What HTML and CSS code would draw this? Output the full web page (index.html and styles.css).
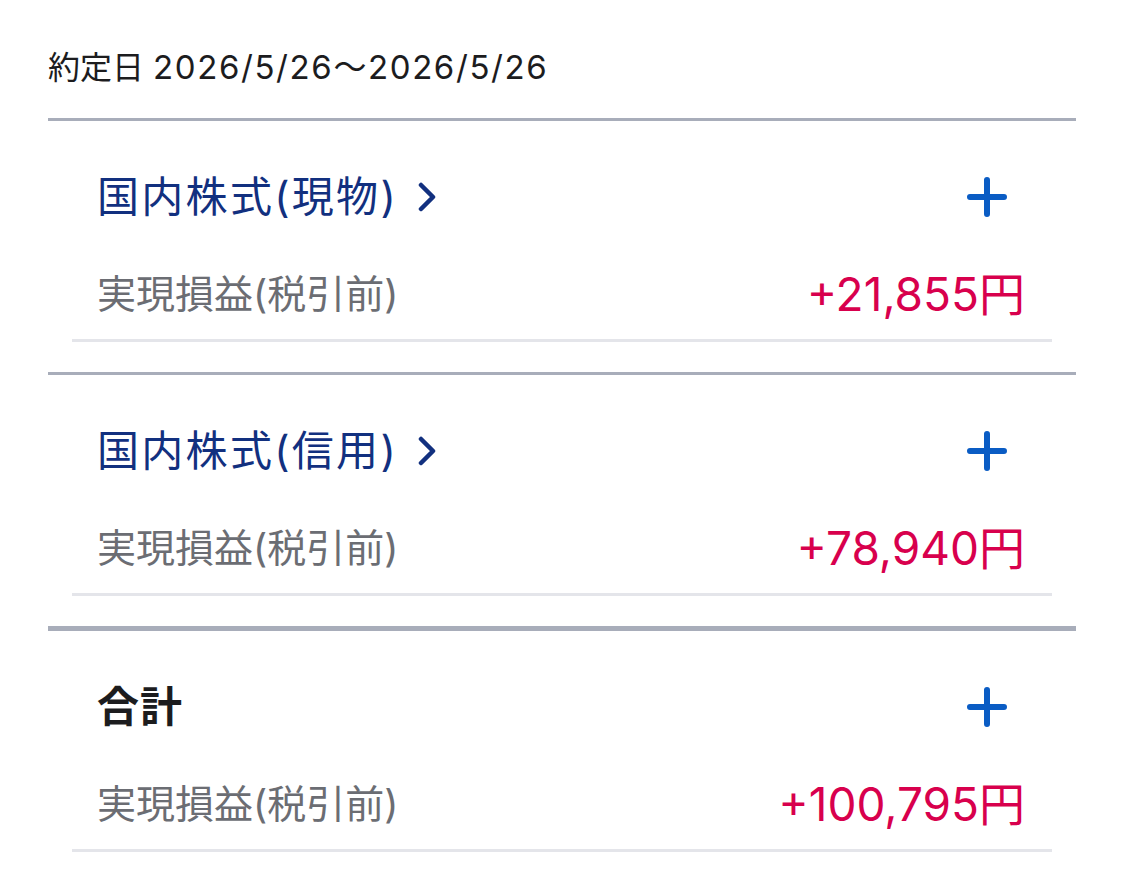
FILE: index.html
```html
<!DOCTYPE html>
<html lang="ja">
<head>
<meta charset="utf-8">
<link rel="stylesheet" href="styles.css">
</head>
<body>
<div class="page">
  <div class="period">約定日 <span class="num">2026/5/26～2026/5/26</span></div>

  <section class="group">
    <div class="inner">
      <div class="head">
        <a class="title link">国内株式(現物)<svg class="chev" viewBox="0 0 20 30" width="20" height="30"><polyline points="3,3 15,15 3,27" /></svg></a>
        <svg class="plus" viewBox="0 0 42 42" width="42" height="42"><path d="M21 4 V38 M4 21 H38"/></svg>
      </div>
      <div class="row">
        <span class="label">実現損益(税引前)</span>
        <span class="value">+21,855円</span>
      </div>
    </div>
  </section>

  <section class="group">
    <div class="inner">
      <div class="head">
        <a class="title link">国内株式(信用)<svg class="chev" viewBox="0 0 20 30" width="20" height="30"><polyline points="3,3 15,15 3,27" /></svg></a>
        <svg class="plus" viewBox="0 0 42 42" width="42" height="42"><path d="M21 4 V38 M4 21 H38"/></svg>
      </div>
      <div class="row">
        <span class="label">実現損益(税引前)</span>
        <span class="value">+78,940円</span>
      </div>
    </div>
  </section>

  <section class="group total">
    <div class="inner">
      <div class="head">
        <span class="title strong">合計</span>
        <svg class="plus" viewBox="0 0 42 42" width="42" height="42"><path d="M21 4 V38 M4 21 H38"/></svg>
      </div>
      <div class="row">
        <span class="label">実現損益(税引前)</span>
        <span class="value">+100,795円</span>
      </div>
    </div>
  </section>
</div>
</body>
</html>
```

FILE: styles.css
```css
html, body {
  margin: 0;
  padding: 0;
  background: #ffffff;
}
body {
  font-family: "Inter", "Noto Sans CJK JP", sans-serif;
  color: #1c1c1e;
}
.page {
  width: 1028px;
  margin-left: 48px;
  padding-top: 47px;
}
.period {
  font-size: 32px;
  line-height: 40px;
  height: 40px;
  margin-bottom: 31px;
  color: #1c1c1e;
}
.period .num {
  font-size: 33px;
  letter-spacing: 1.6px;
}
.group {
  border-top: 3px solid #a8adba;
  padding-bottom: 30px;
}
.group.total {
  border-top-width: 5px;
}
.inner {
  margin: 0 24px;
  border-bottom: 3px solid #e4e5ea;
  padding-bottom: 19px;
}
.head {
  display: flex;
  align-items: center;
  justify-content: space-between;
  padding: 50px 44px 0 25px;
  height: 52px;
}
.title {
  font-size: 42px;
  line-height: 52px;
  display: flex;
  align-items: center;
}
.link {
  color: #12307f;
  text-decoration: none;
  letter-spacing: 2.3px;
}
.strong {
  font-weight: 700;
  color: #1c1c1e;
  letter-spacing: 1px;
}
.chev {
  margin-left: 20px;
  fill: none;
  stroke: #12307f;
  stroke-width: 4.5;
  stroke-linecap: round;
  stroke-linejoin: round;
}
.plus {
  fill: none;
  stroke: #0a5cc4;
  stroke-width: 6;
  stroke-linecap: round;
}
.row {
  display: flex;
  align-items: center;
  justify-content: space-between;
  margin-top: 45px;
  height: 52px;
  padding: 0 27px 0 25px;
}
.label {
  font-size: 39px;
  line-height: 52px;
  color: #6b6d73;
}
.value {
  font-size: 46px;
  line-height: 52px;
  color: #d8004d;
}
```
